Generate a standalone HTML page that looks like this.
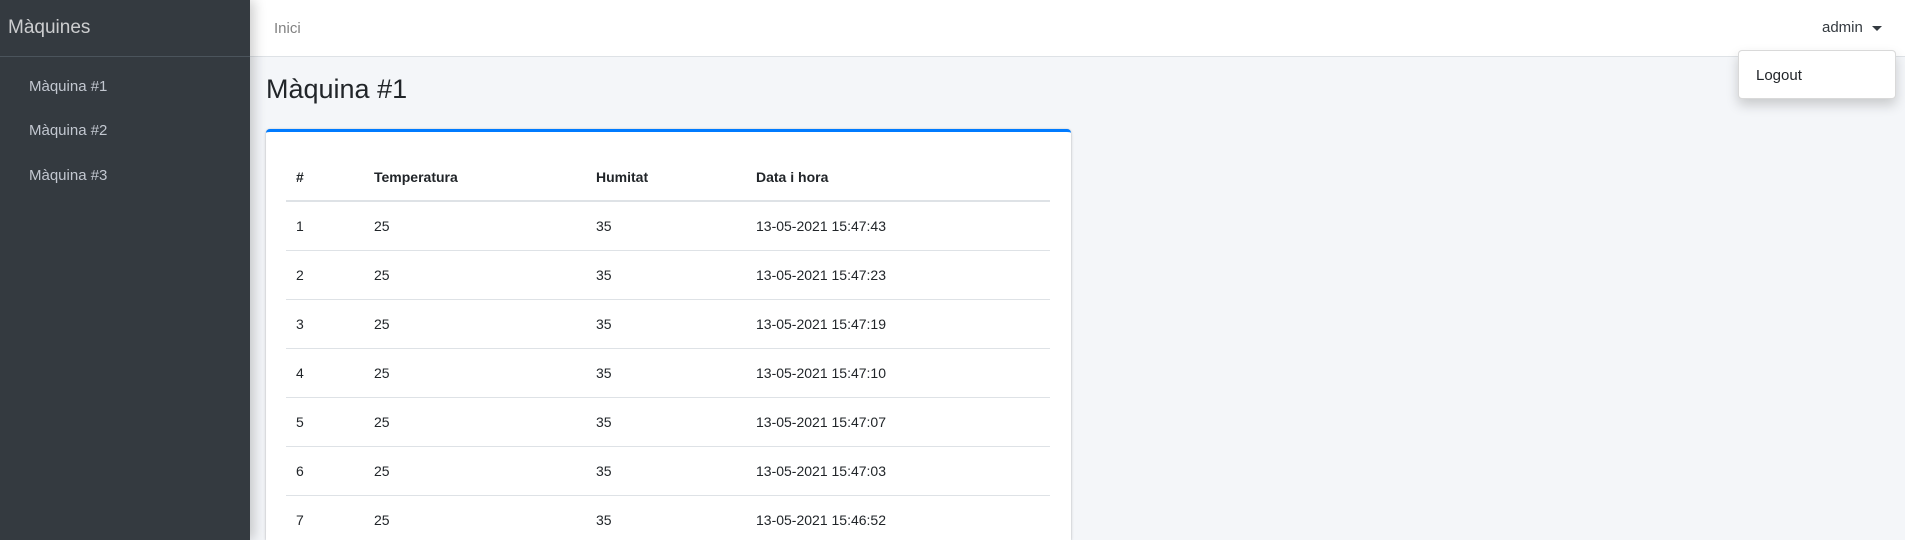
<!DOCTYPE html>
<html style="overflow:hidden;height:540px"><head><meta charset="utf-8"><style>
*{box-sizing:border-box;margin:0;padding:0}
body{width:1905px;height:540px;overflow:hidden;background:#f4f6f9;font-family:"Liberation Sans",sans-serif;color:#212529;position:relative}
.side{position:absolute;left:0;top:0;width:250px;height:540px;background:#343a40;box-shadow:4px 0 12px rgba(0,0,0,.2);z-index:2}
.brand{height:57px;border-bottom:1px solid #4b545c;color:rgba(255,255,255,.75);font-size:19px;font-weight:300;padding:17px 8px}
.side a{display:block;color:#c2c7d0;font-size:15px;position:absolute;left:29px}
.nav{position:absolute;left:250px;top:0;right:0;height:57px;background:#fff;border-bottom:1px solid #dee2e6}
.inici{position:absolute;left:274px;top:20px;font-size:15px;color:rgba(0,0,0,.5)}
.admin{position:absolute;left:1822px;top:19px;font-size:15px;color:#343a40}
.caret{position:absolute;left:1872px;top:26px;border-top:5px solid #343a40;border-left:5px solid transparent;border-right:5px solid transparent}
.dd{position:absolute;left:1738px;top:50px;width:158px;height:49px;background:#fff;border:1px solid rgba(0,0,0,.15);border-radius:4px;box-shadow:0 6px 12px rgba(0,0,0,.18);font-size:15px;padding:16px 17px;z-index:3}
h1{position:absolute;left:266px;top:74px;font-size:27px;font-weight:400;color:#212529}
.card{position:absolute;left:266px;top:129px;width:805px;height:411px;background:#fff;border-top:3px solid #007bff;border-radius:4px 4px 0 0;box-shadow:0 0 1px rgba(0,0,0,.2),0 1px 3px rgba(0,0,0,.2);overflow:hidden}
table{position:absolute;left:20px;top:28px;width:764px;border-collapse:collapse;font-size:14px}
th{text-align:left;height:41px;padding:9px 10px 0;border-bottom:2px solid #dee2e6;font-weight:700;vertical-align:top}
td{height:49px;padding:0 10px;border-bottom:1px solid #dee2e6}
</style></head><body>
<div class="side"><div class="brand">Màquines</div>
<a style="top:78px">Màquina #1</a><a style="top:122px">Màquina #2</a><a style="top:167px">Màquina #3</a></div>
<div class="nav"></div>
<div class="inici">Inici</div>
<div class="admin">admin</div><div class="caret"></div>
<div class="dd">Logout</div>
<h1>Màquina #1</h1>
<div class="card"><table>
<tr><th style="width:78px">#</th><th style="width:222px">Temperatura</th><th style="width:160px">Humitat</th><th>Data i hora</th></tr>
<tr><td>1</td><td>25</td><td>35</td><td>13-05-2021 15:47:43</td></tr>
<tr><td>2</td><td>25</td><td>35</td><td>13-05-2021 15:47:23</td></tr>
<tr><td>3</td><td>25</td><td>35</td><td>13-05-2021 15:47:19</td></tr>
<tr><td>4</td><td>25</td><td>35</td><td>13-05-2021 15:47:10</td></tr>
<tr><td>5</td><td>25</td><td>35</td><td>13-05-2021 15:47:07</td></tr>
<tr><td>6</td><td>25</td><td>35</td><td>13-05-2021 15:47:03</td></tr>
<tr><td>7</td><td>25</td><td>35</td><td>13-05-2021 15:46:52</td></tr>
</table></div>
</body></html>
